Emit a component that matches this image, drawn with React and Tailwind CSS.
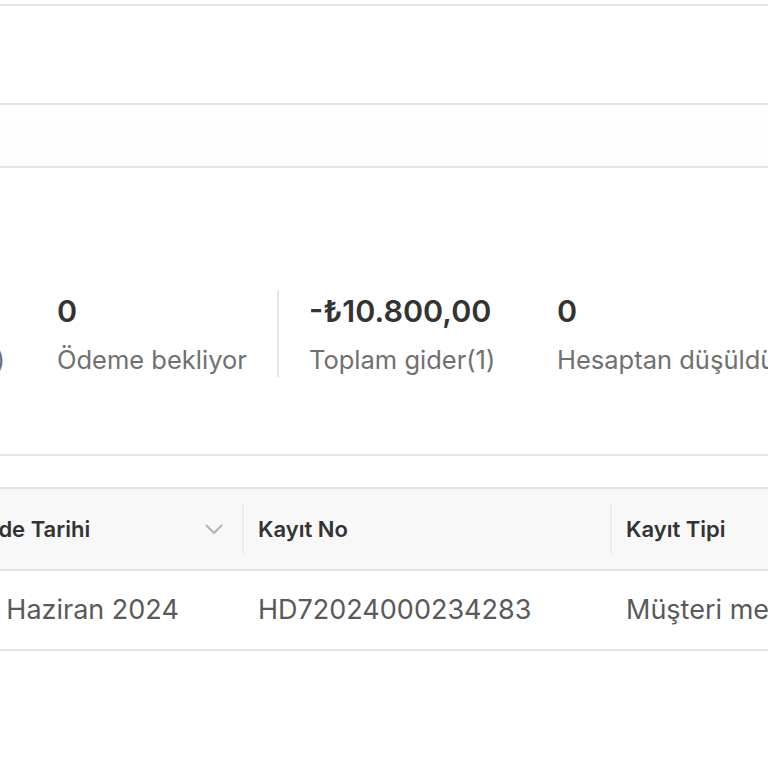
import React from "react";

const stats = [
  { value: "0", label: "Ödeme bekliyor" },
  { value: "-₺10.800,00", label: "Toplam gider(1)" },
  { value: "0", label: "Hesaptan düşüldü" },
];

const ChevronDown = () => (
  <svg width="18" height="11" viewBox="0 0 18 11" fill="none">
    <path d="M1.5 1.5 L9 9 L16.5 1.5" stroke="#b3b3b3" strokeWidth="2" strokeLinecap="round" strokeLinejoin="round" />
  </svg>
);

export default function App() {
  return (
    <div
      className="w-[768px] h-[768px] overflow-hidden bg-white"
      style={{ fontFamily: "Inter, 'Noto Sans', sans-serif" }}
    >
      {/* top bars */}
      <div className="mt-[4px] border-t-2 border-[#e4e4e4] h-[99px]" />
      <div className="border-t-2 border-[#e4e4e4] h-[63px] bg-[#fefefe]" />

      {/* summary */}
      <div className="border-t-2 border-[#e4e4e4] pt-[122px] pb-[77px]">
        <div className="flex items-stretch whitespace-nowrap">
          {/* clipped item on the left */}
          <div className="w-[5px] shrink-0 flex flex-col items-end pt-[3px]">
            <div className="h-[36px]" />
            <div className="mt-[16px] text-[25.5px] leading-[30px] text-[#707070]">
              Toplam gelir(0)
            </div>
          </div>

          <div className="ml-[52px] w-[220px] shrink-0 pt-[3px] pb-[2px]">
            <div className="text-[30.5px] leading-[36px] font-semibold text-[#333333]">{stats[0].value}</div>
            <div className="mt-[16px] text-[25.5px] leading-[30px] text-[#707070]">{stats[0].label}</div>
          </div>

          <div className="w-[280px] shrink-0 border-l-2 border-[#e6e6e6] pl-[30px] pt-[3px] pb-[2px]">
            <div className="text-[30.5px] leading-[36px] font-semibold text-[#333333]">{stats[1].value}</div>
            <div className="mt-[16px] text-[25.5px] leading-[30px] text-[#707070]">{stats[1].label}</div>
          </div>

          <div className="shrink-0 pt-[3px] pb-[2px]">
            <div className="text-[30.5px] leading-[36px] font-semibold text-[#333333]">{stats[2].value}</div>
            <div className="mt-[16px] text-[25.5px] leading-[30px] text-[#707070]">{stats[2].label}</div>
          </div>
        </div>
      </div>

      {/* table */}
      <div className="border-t-2 border-[#e4e4e4] pt-[31px]">
        <div className="border-t-2 border-[#e4e4e4]">
          {/* header */}
          <div className="flex items-center h-[80px] bg-[#f8f8f8] whitespace-nowrap text-[22px] font-semibold text-[#333333]">
            <div className="-ml-[40px] w-[282px] shrink-0 flex items-center justify-between pl-[11px] pr-[19px]">
              <span>Vade Tarihi</span>
              <ChevronDown />
            </div>
            <div className="w-[2px] h-[50px] shrink-0 bg-[#ececec]" />
            <div className="w-[366px] shrink-0 pl-[14px]">Kayıt No</div>
            <div className="w-[2px] h-[50px] shrink-0 bg-[#ececec]" />
            <div className="shrink-0 pl-[14px]">Kayıt Tipi</div>
          </div>

          {/* row */}
          <div className="flex items-center h-[82px] border-t-2 border-b-2 border-[#e4e4e4] whitespace-nowrap text-[27px] text-[#5a5a5a]">
            <div className="-ml-[40px] w-[282px] shrink-0 pl-[11px]">19 Haziran 2024</div>
            <div className="w-[368px] shrink-0 pl-[16px]">HD72024000234283</div>
            <div className="shrink-0 pl-[16px]">Müşteri merkezi</div>
          </div>
        </div>
      </div>
    </div>
  );
}
